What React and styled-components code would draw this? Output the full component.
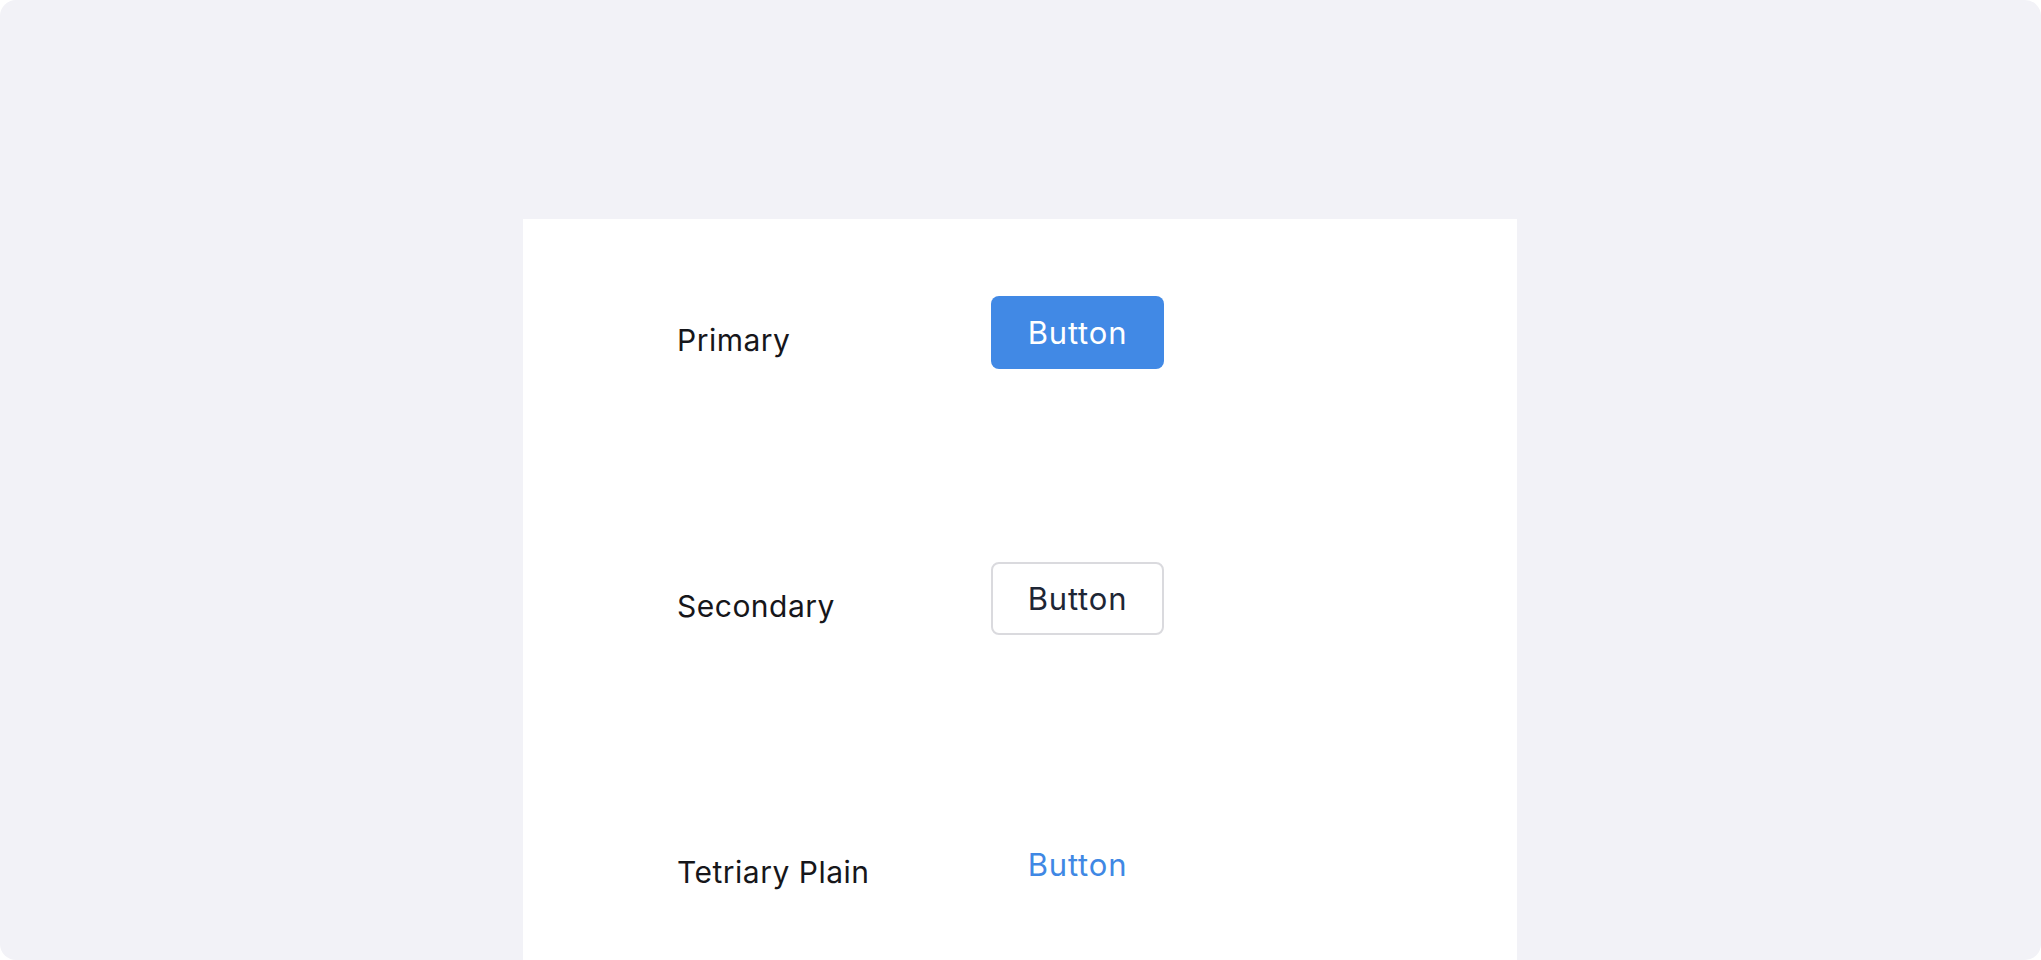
import React from "react";
import styled, { createGlobalStyle } from "styled-components";

const GlobalStyle = createGlobalStyle`
  html, body {
    margin: 0;
    padding: 0;
    background: #ffffff;
  }
  body {
    font-family: Inter, "Noto Sans", "Liberation Sans", sans-serif;
  }
`;

const variants = [
  { label: "Primary", kind: "primary" },
  { label: "Secondary", kind: "secondary" },
  { label: "Tetriary Plain", kind: "plain" },
];

const App = () => {
  return (
    <>
      <GlobalStyle />
      <Frame>
        <Panel>
          {variants.map((v) => (
            <Row key={v.kind}>
              <Label>{v.label}</Label>
              <Button kind={v.kind}>Button</Button>
            </Row>
          ))}
        </Panel>
      </Frame>
    </>
  );
};

const Frame = styled.div`
  height: 960px;
  box-sizing: border-box;
  background: #f2f2f7;
  border-radius: 16px;
  padding: 219px 0 0 523px;
  overflow: hidden;
`;

const Panel = styled.div`
  width: 994px;
  height: 100%;
  box-sizing: border-box;
  background: #ffffff;
  padding: 77px 0 0 154px;
  display: flex;
  flex-direction: column;
  gap: 193px;
`;

const Row = styled.div`
  display: grid;
  grid-template-columns: 314px auto;
  align-items: center;
  height: 73px;
`;

const Label = styled.span`
  font-size: 30px;
  letter-spacing: 0.5px;
  color: #16161a;
  margin-top: 14px;
`;

const Button = styled.button`
  width: 173px;
  height: 73px;
  padding: 0;
  box-sizing: border-box;
  border-radius: 8px;
  font-family: inherit;
  font-size: 31px;
  letter-spacing: 0.8px;
  cursor: pointer;
  border: 2px solid
    ${(p) => (p.kind === "secondary" ? "#dadade" : "transparent")};
  background: ${(p) => (p.kind === "primary" ? "#4189e5" : "#ffffff")};
  color: ${(p) =>
    p.kind === "primary" ? "#ffffff" : p.kind === "secondary" ? "#1e2635" : "#3f88e4"};
`;

export default App;
